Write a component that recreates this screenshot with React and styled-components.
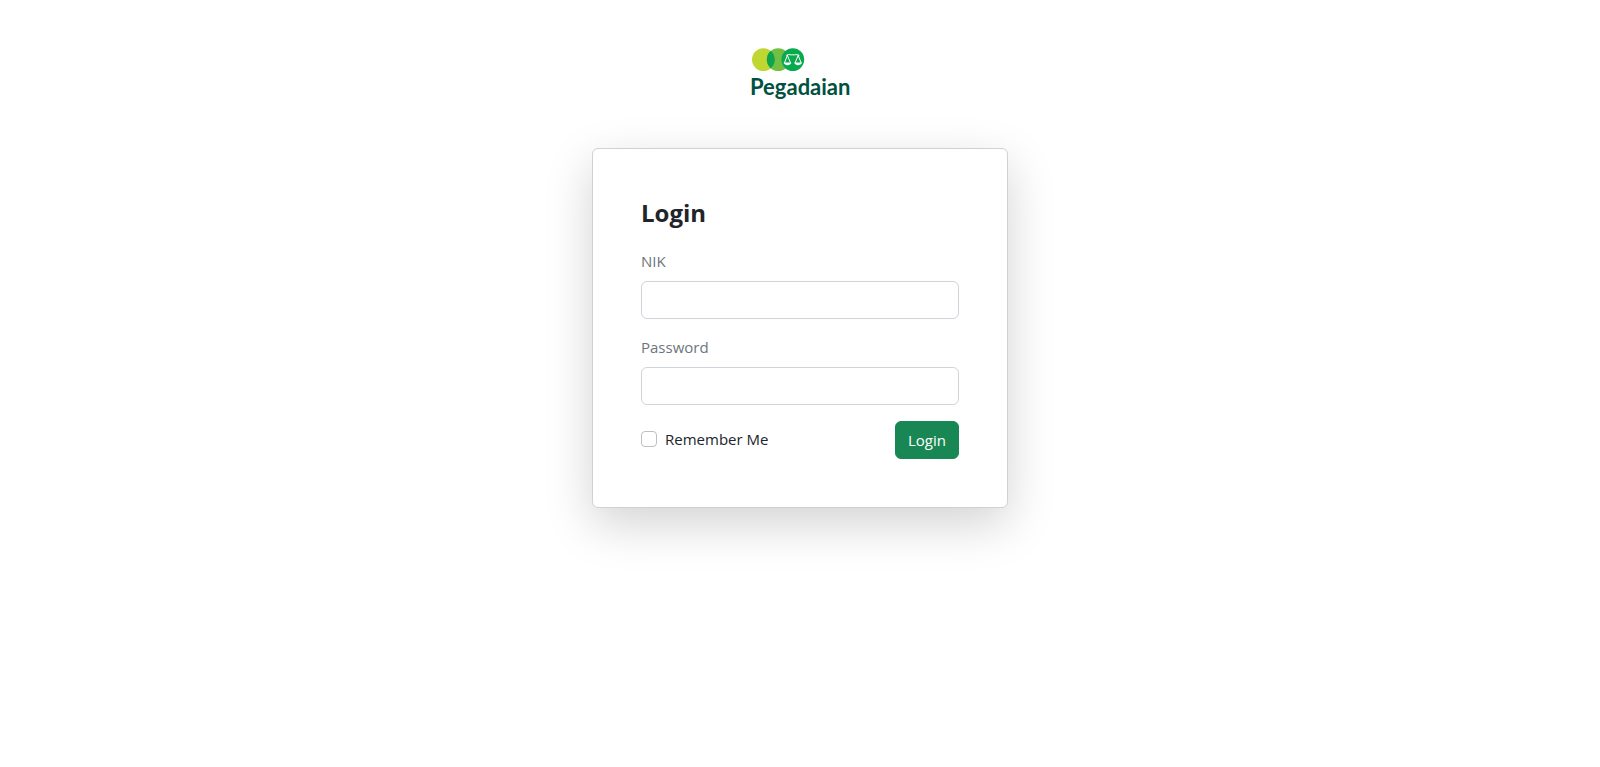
import React from "react";
import styled, { createGlobalStyle } from "styled-components";

const GlobalStyle = createGlobalStyle`
  *, *::before, *::after { box-sizing: border-box; }
  body {
    margin: 0;
    background: #fff;
    color: #212529;
    font-family: "Segoe UI", "Open Sans", "Noto Sans", sans-serif;
    font-size: 15px;
    line-height: 24px;
  }
`;

const Page = styled.main`
  display: flex;
  flex-direction: column;
  align-items: center;
  min-height: 100vh;
  padding: 0 12px 48px;
`;

const Brand = styled.div`
  display: flex;
  flex-direction: column;
  width: 100px;
  margin: 48px 0 46px;
`;

const BrandMark = styled.svg`
  display: block;
  width: 56px;
  height: 24px;
`;

const BrandName = styled.span`
  color: #00513f;
  font-family: Lato, sans-serif;
  font-size: 22px;
  font-weight: 700;
  line-height: 30px;
`;

const Card = styled.section`
  width: 100%;
  max-width: 416px;
  padding: 48px;
  background: #fff;
  border: 1px solid #d0d1d2;
  border-radius: 6px;
  box-shadow: 0 16px 48px rgba(0, 0, 0, 0.175);
`;

const Title = styled.h1`
  margin: 0 0 20px;
  font-size: 24px;
  font-weight: 700;
  line-height: 32px;
`;

const Field = styled.div`
  margin-bottom: 16px;
`;

const Label = styled.label`
  display: block;
  margin-bottom: 8px;
  color: #6c757d;
`;

const Input = styled.input`
  display: block;
  width: 100%;
  height: 38px;
  padding: 6px 12px;
  color: inherit;
  font: inherit;
  background: #fff;
  border: 1px solid #ced4da;
  border-radius: 6px;
`;

const Actions = styled.div`
  display: flex;
  align-items: center;
  justify-content: space-between;
`;

const Remember = styled.label`
  display: flex;
  align-items: center;
  gap: 8px;
  padding-bottom: 2px;
`;

const Checkbox = styled.input`
  appearance: none;
  width: 16px;
  height: 16px;
  margin: 0;
  background: #fff;
  border: 1px solid #bfbfbf;
  border-radius: 4px;
  &:checked {
    background: #198754;
    border-color: #198754;
  }
`;

const Button = styled.button`
  height: 38px;
  padding: 6px 12px;
  color: #fff;
  font: inherit;
  background: #198754;
  border: 1px solid #198754;
  border-radius: 6px;
  cursor: pointer;
`;

function Mark() {
  return (
    <BrandMark viewBox="0 0 56 24" aria-hidden="true">
      <defs>
        <clipPath id="lime">
          <circle cx="13.4" cy="11.6" r="11.4" />
        </clipPath>
      </defs>
      <circle cx="13.4" cy="11.6" r="11.4" fill="#bfd730" />
      <circle cx="28.2" cy="11.6" r="11.4" fill="#72bf44" />
      <circle cx="28.2" cy="11.6" r="11.4" fill="#0ba54c" clipPath="url(#lime)" />
      <circle cx="42.8" cy="11.6" r="11.4" fill="#09a94e" />
      <g fill="none" stroke="#fff" strokeWidth="1" strokeLinejoin="round" strokeLinecap="round">
        <path d="M36.6 7.2C39 5.6 41 7.4 42.8 6.8C44.6 7.4 46.6 5.6 49 7.2" />
        <path d="M37.4 7.4L34.4 15M37.4 7.4L40.6 15M48.2 7.4L45 15M48.2 7.4L51.2 15" />
      </g>
      <path d="M33.8 14.6H41.2C40.8 18 34.2 18 33.8 14.6ZM44.4 14.6H51.8C51.4 18 44.8 18 44.4 14.6Z" fill="#fff" />
    </BrandMark>
  );
}

export default function App() {
  return (
    <>
      <GlobalStyle />
      <Page>
        <Brand>
          <Mark />
          <BrandName>Pegadaian</BrandName>
        </Brand>
        <Card>
          <Title>Login</Title>
          <form onSubmit={(e) => e.preventDefault()}>
            <Field>
              <Label htmlFor="nik">NIK</Label>
              <Input id="nik" type="text" name="nik" />
            </Field>
            <Field>
              <Label htmlFor="password">Password</Label>
              <Input id="password" type="password" name="password" />
            </Field>
            <Actions>
              <Remember htmlFor="remember">
                <Checkbox id="remember" type="checkbox" name="remember" />
                Remember Me
              </Remember>
              <Button type="submit">Login</Button>
            </Actions>
          </form>
        </Card>
      </Page>
    </>
  );
}
